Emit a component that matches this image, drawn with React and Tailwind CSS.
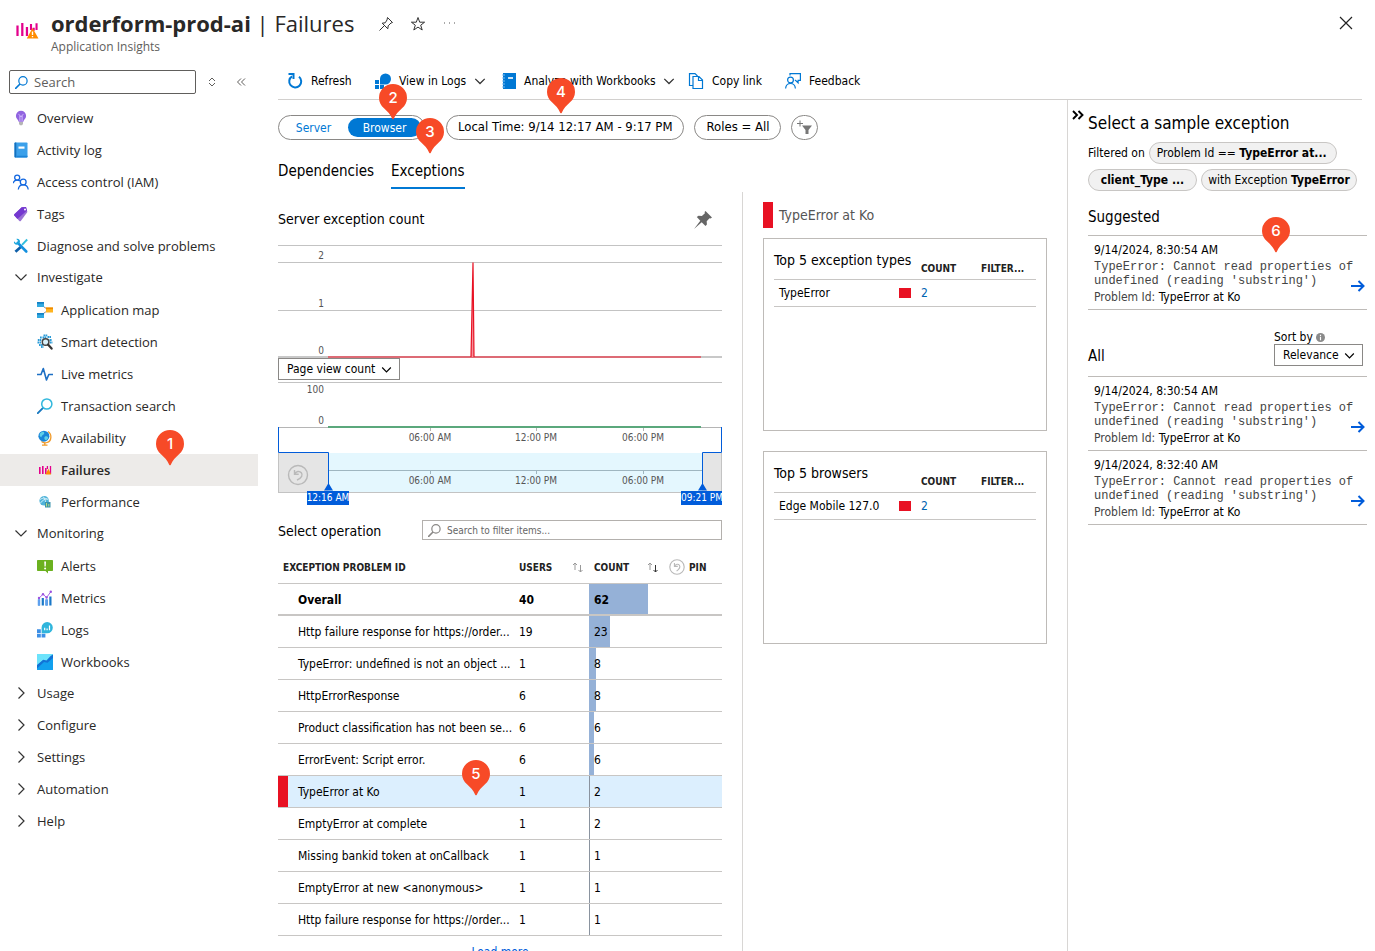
import React from "react";

const BLUE = "#0078d4";

function Svg({ size = 16, box = 16, children, className = "" }) {
  return (
    <svg width={size} height={size} viewBox={`0 0 ${box} ${box}`} fill="none" aria-hidden="true" className={"shrink-0 " + className}>
      {children}
    </svg>
  );
}

const FailuresIcon = ({ size = 16 }) => (
  <Svg size={size}>
    <path d="M1 5v7M4.2 3.300v8.700M7.300 6v6" stroke="#e3008c" strokeWidth="1.500" />
    <path d="M10 8V4M13.700 8V3.500M11.800 6.500v2" stroke="#e3008c" strokeWidth="1.400" />
    <path d="M11 6.600 15 13.700H7.200z" fill="#ff8c00" />
    <path d="M11 9v2.400M11 12v.9" stroke="#fff" strokeWidth=".9" />
  </Svg>
);

const FailuresSmallIcon = () => (
  <Svg>
    <path d="M2.800 5v7M5.800 4v8M8.800 6v6" stroke="#e3008c" strokeWidth="1.600" />
    <path d="M10.400 4v3M13.500 4v8" stroke="#e3008c" strokeWidth="1.300" />
    <path d="M11.400 6.800 14.200 12.500H8.400z" fill="#ff8c00" />
  </Svg>
);

const OverviewIcon = () => (
  <Svg>
    <path d="M8 .8a5.100 5.100 0 0 0-5.100 5.100c0 2.600 2.400 3.500 2.800 5.800h4.600c.4-2.300 2.800-3.200 2.800-5.800A5.100 5.100 0 0 0 8 .8z" fill="#9164e0" />
    <path d="M6.900 11V6.200M9.100 11V6.200M5.600 4.400c1.300 0 1.300 1.900 1.300 1.900h2.200s0-1.900 1.300-1.900" stroke="#d9c3ff" strokeWidth=".9" />
    <path d="M6 12h4v2l-1 1.300H7L6 14z" fill="#b5b5b5" />
  </Svg>
);

const LogBookIcon = () => (
  <Svg>
    <rect x="1.500" y=".5" width="13" height="15" rx=".8" fill="#3ba0ea" />
    <path d="M1.500 1.300a.8.800 0 0 1 .8-.8h1v15h-1a.8.800 0 0 1-.8-.8z" fill="#1470bd" />
    <path d="M3.300 13.800h11.200v.9a.8.800 0 0 1-.8.800H3.300z" fill="#1c84d8" />
    <rect x="5.500" y="4.500" width="6" height="2.200" fill="#fff" />
  </Svg>
);

const PeopleIcon = () => (
  <Svg>
    <g stroke="#1267e0" strokeWidth="1.300">
      <circle cx="4.200" cy="3.600" r="2.500" />
      <circle cx="10.200" cy="8" r="2.900" />
      <path d="M.3 9.200c.3-2 1.700-3.100 3.900-3.100 1.100 0 2 .3 2.700.8M5.300 15.500c.3-2.900 2-4.600 4.900-4.600s4.700 1.700 5 4.600" />
    </g>
  </Svg>
);

const TagIcon = () => (
  <Svg>
    <path d="M8.700 1.200 13 .9l1.400 5-6.600 9a1 1 0 0 1-1.400.1L1.300 9.600a1 1 0 0 1 0-1.300z" fill="#9a72d4" />
    <path d="m8.700 1.200 4.300-.3 1 3.600L4.400 12.900 1.300 9.600a1 1 0 0 1 0-1.300z" fill="#7438d0" />
    <circle cx="12" cy="3.400" r="1" fill="#fff" />
  </Svg>
);

const ToolsIcon = () => (
  <Svg>
    <path d="M14.200 1.500 9 6.800" stroke="#32bedd" strokeWidth="1.900" />
    <path d="M6.900 8 1.500 12.800l1.900 2L8.600 9.900z" fill="#0f5fa8" />
    <path d="m4.800 4.800 8.500 8.700" stroke="#1490df" strokeWidth="2.600" strokeLinecap="round" />
    <path d="M1 3.200 2.800 5l1.700-.4.5-1.800L3.300 1c2.200-.6 4 .9 3.700 3.300L4.800 6.600C2.400 7 .4 5.500 1 3.200z" fill="#1ba7dc" />
  </Svg>
);

const AppMapIcon = () => (
  <Svg>
    <path d="M5 3.500 10 7M5 12.500 10 9" stroke="#8a8a8a" strokeWidth="1" />
    <rect x="0" y="0" width="7" height="5" fill="#32a9e0" />
    <rect x="0" y="0" width="7" height="1.700" fill="#1380c4" />
    <rect x="0" y="11" width="7" height="5" fill="#32a9e0" />
    <rect x="0" y="11" width="7" height="1.700" fill="#1380c4" />
    <rect x="9" y="5.500" width="7" height="5" fill="#ffb41f" />
    <rect x="9" y="5.500" width="7" height="1.700" fill="#f08a00" />
  </Svg>
);

const SmartIcon = () => (
  <Svg>
    <path d="M3 3.500h2M6.500 1.300h4M10.500 3h3.500M.8 6h3.500M12.500 6H15M.5 8.500h3.500M2 11h4M13 8.500h2.500M5.500 3.500h4M4 13h2.500" stroke="#2b9bd7" strokeWidth="1.800" strokeDasharray="1.700 .4" />
    <circle cx="8.600" cy="8" r="3.300" fill="#d8f1fb" stroke="#444" strokeWidth="1.500" />
    <path d="m11 10.600 3.600 4" stroke="#333" strokeWidth="2.200" strokeLinecap="round" />
  </Svg>
);

const PulseIcon = () => (
  <Svg>
    <path d="M0 8.500h4L6.300 2.500l3.200 11.500 2.300-5.500H16" stroke="#1d6fc4" strokeWidth="1.600" strokeLinejoin="round" />
  </Svg>
);

const LensIcon = ({ color = "#32b8dd", handle = "#1878c0", size = 16, className = "" }) => (
  <Svg size={size} className={className}>
    <path d="m5.800 10.200-5 5" stroke={handle} strokeWidth="1.900" strokeLinecap="round" />
    <circle cx="9.800" cy="6" r="5.100" stroke={color} strokeWidth="1.500" />
  </Svg>
);

const GlobeIcon = () => (
  <Svg>
    <path d="M11 1.500c4 2.500 4 9.500-1 11-2 .6-4 .3-5.500-1" stroke="#f09a2a" strokeWidth="1.300" />
    <circle cx="6.900" cy="6.200" r="5.500" fill="#1b86d8" />
    <path d="M3 3.500c2-2.500 4-2 4.300-.5C7 5 4.500 5 4.500 7.300 3 7 2 5.500 3 3.500zM8 6.500c2-.8 3.200 0 3 1.500-.5 1.800-2 2.500-3 1.800-.7-1-1-2.500 0-3.300z" fill="#5fd0e8" />
    <path d="M7.800 12.800v2M5 15.200h5.500" stroke="#f09a2a" strokeWidth="1.300" />
  </Svg>
);

const PerfIcon = () => (
  <Svg>
    <circle cx="7.200" cy="6.800" r="4.800" fill="#4fb3d9" />
    <path d="M3 5.500c3-2 6-1.500 8.500.5M3.500 9c2-3 5-4.500 7-4M6 2.500c2 2 3 5 2.500 8.500" stroke="#d7f1fa" strokeWidth=".9" />
    <rect x="8" y="8" width="5.500" height="5.500" fill="#3b93ad" />
    <path d="M9.500 9v3.500M11.800 10v2.500" stroke="#c5e37a" strokeWidth=".9" />
  </Svg>
);

const AlertIcon = () => (
  <Svg>
    <path d="M.7 2h14.600a.7.700 0 0 1 .7.700v9.600a.7.700 0 0 1-.7.700H11v2.500L8.500 13H.7a.7.700 0 0 1-.7-.7V2.700A.7.700 0 0 1 .7 2z" fill="#6bb11f" />
    <path d="M7.200 3.500h1.800l-.3 5H7.500z" fill="#fff" />
    <circle cx="8.100" cy="10.400" r="1" fill="#fff" />
  </Svg>
);

const MetricsIcon = () => (
  <Svg>
    <path d="M2 9.500v6M5.800 8v7.500M9.600 9.500v6M13.400 6.500v9" stroke="#1a78c8" strokeWidth="2.200" />
    <path d="M2 9.500v6M9.600 9.500v6" stroke="#5ea0ef" strokeWidth="2.200" />
    <path d="m2 8.200 4-4L9.600 7.500 14 1.500" stroke="#a566e8" strokeWidth="1" />
    <g fill="#9b52e0"><circle cx="2" cy="8" r="1.200" /><circle cx="6" cy="4.200" r="1.200" /><circle cx="9.600" cy="7.500" r="1.200" /><circle cx="13.800" cy="1.700" r="1.200" /></g>
  </Svg>
);

const LogsIcon = () => (
  <Svg>
    <path d="M0 7.200h3.800V11H0zM0 11.700h3.800v3.800H0zM4.600 11.700h3.800v3.800H4.600z" fill="#3d8fe6" />
    <path d="M4.600 5.800A5.600 5.600 0 1 1 10 11.200H4.600z" fill="#2fb5dc" />
    <path d="M7.700 5.800v2.500M10.100 6.600v1.700M12.500 3.600v4.700" stroke="#fff" strokeWidth="1.200" />
  </Svg>
);

const WorkbooksIcon = () => (
  <Svg>
    <rect width="16" height="16" rx=".5" fill="#12a0ee" />
    <path d="M0 0h16v1L9.500 7 6 6.200 0 12z" fill="#6de3fb" />
    <path d="M16 .5v3.600L10.500 8.800 7 8 0 14.500V11l6.200-5.200 3.300.8L13.600 2z" fill="#1272d6" />
  </Svg>
);

const Chevron = ({ dir = "down", size = 14, color = "#333", width = 1.2 }) => (
  <Svg size={size} box={14}>
    <path d={dir === "down" ? "M1.500 4.500 7 10l5.500-5.500" : "M4.500 1.500 10 7l-5.500 5.500"} stroke={color} strokeWidth={width} />
  </Svg>
);

const UndoCircle = ({ size = 16 }) => (
  <Svg size={size} box={20}>
    <circle cx="10" cy="10" r="9" stroke="#b9b9b9" strokeWidth="1.400" />
    <path d="M6.800 5v4.200H11M7 9c1.500-2.700 4.500-3.200 6-1.200 1.500 2.300.5 4.300-3.500 7.400" stroke="#b9b9b9" strokeWidth="1.400" />
  </Svg>
);

function Marker({ n, className }) {
  return (
    <span className={"pointer-events-none absolute z-20 flex h-9 w-7 justify-center " + className}>
      <svg width="28" height="36" viewBox="0 0 28 36" className="absolute left-0 top-0" aria-hidden="true">
        <path d="M14 0a14 14 0 0 1 14 14c0 4.500-2 7.500-5 10.300-3.500 3.200-6.500 6.200-8.200 10.400q-.8 1.300-1.600 0C11.500 30.500 8.500 27.500 5 24.300 2 21.500 0 18.500 0 14A14 14 0 0 1 14 0z" fill="#f74a27" />
      </svg>
      <span className="relative font-[Inter,sans-serif] text-[15px] font-medium leading-7 text-white">{n}</span>
    </span>
  );
}

const topItems = [
  ["Overview", OverviewIcon],
  ["Activity log", LogBookIcon],
  ["Access control (IAM)", PeopleIcon],
  ["Tags", TagIcon],
  ["Diagnose and solve problems", ToolsIcon],
];
const investigate = [
  ["Application map", AppMapIcon],
  ["Smart detection", SmartIcon],
  ["Live metrics", PulseIcon],
  ["Transaction search", LensIcon],
  ["Availability", GlobeIcon],
  ["Failures", FailuresSmallIcon],
  ["Performance", PerfIcon],
];
const monitoring = [
  ["Alerts", AlertIcon],
  ["Metrics", MetricsIcon],
  ["Logs", LogsIcon],
  ["Workbooks", WorkbooksIcon],
];

function NavItem({ label, Icon, nested }) {
  const active = label === "Failures";
  return (
    <li className={"relative " + (active ? "bg-[#edebe9] font-semibold" : "")}>
      <a href="#" aria-current={active ? "page" : undefined} className={"flex h-8 items-center gap-2 " + (nested ? "pl-[37px]" : "pl-[13px]")}>
        <Icon />
        {label}
      </a>
      {active && <Marker n="1" className="-top-6 left-[156px]" />}
    </li>
  );
}

function NavGroup({ label, items }) {
  return (
    <li>
      <button type="button" aria-expanded={!!items} className="flex h-8 w-full items-center gap-[9px] pb-[2px] pl-[14px] text-left">
        <Chevron dir={items ? "down" : "right"} />
        {label}
      </button>
      {items && <ul>{items.map(([l, I]) => <NavItem key={l} label={l} Icon={I} nested />)}</ul>}
    </li>
  );
}

function Sidebar() {
  return (
    <nav className="w-[258px] shrink-0 text-[13px] leading-4 text-[#292827] [font-family:'Open_Sans','Noto_Sans',sans-serif]" aria-label="Resource menu">
      <div className="mb-2 flex items-center pl-[9px] pt-1">
        <label className="flex h-6 w-[187px] items-center gap-1.5 rounded-[2px] border border-[#605e5c] px-[5px]">
          <LensIcon size={13} color={BLUE} handle={BLUE} />
          <input type="text" aria-label="Search" placeholder="Search" className="w-full min-w-0 bg-transparent outline-none placeholder:text-[#605e5c]" />
        </label>
        <button type="button" aria-label="Expand or collapse all" className="ml-2 flex w-4 justify-center">
          <Svg size={10} box={10}><path d="M2 4l3-3 3 3M2 6l3 3 3-3" stroke="#605e5c" /></Svg>
        </button>
        <button type="button" aria-label="Collapse menu" className="ml-4 flex">
          <Svg size={10} box={10}><path d="M5 1.500 1.500 5 5 8.500M9 1.500 5.500 5 9 8.500" stroke="#605e5c" /></Svg>
        </button>
      </div>
      <ul>
        {topItems.map(([l, I]) => <NavItem key={l} label={l} Icon={I} />)}
        <NavGroup label="Investigate" items={investigate} />
        <NavGroup label="Monitoring" items={monitoring} />
        {["Usage", "Configure", "Settings", "Automation", "Help"].map((l) => <NavGroup key={l} label={l} />)}
      </ul>
    </nav>
  );
}

function Toolbar() {
  return (
    <div className="mr-[13px] flex h-[34px] items-center whitespace-nowrap border-b border-[#d2d0ce] pb-[3px] pl-[9px] pr-3 text-[12px]" role="toolbar">
      <button type="button" className="flex w-[88px] items-center gap-2">
        <Svg><path d="M5 3.400A6 6 0 1 0 12 3.800" stroke={BLUE} strokeWidth="2" /><path d="M1.500 1h5v5" stroke={BLUE} strokeWidth="2" /></Svg>
        Refresh
      </button>
      <button type="button" className="flex w-[126px] items-center gap-2 pr-[19px]">
        <Svg><path d="M0 7h4v4H0zM0 12h4v4H0zM5 12h4v4H5zM5 6a5.500 5.500 0 1 1 5.500 5.500H5z" fill={BLUE} /></Svg>
        <span className="mr-auto">View in Logs</span>
        <Chevron size={12} width={1.500} />
      </button>
      <button type="button" className="flex w-[187px] items-center gap-[7px] pr-[19px]">
        <Svg>
          <path d="M2 0h13v16H2z" fill={BLUE} />
          <path d="M1 2h3M1 5h3M1 8h3M1 11h3M1 14h3" stroke="#7fbdf0" />
          <path d="M7 5h5" stroke="#fff" strokeWidth="1.600" />
        </Svg>
        <span className="mr-auto">Analyze with Workbooks</span>
        <Chevron size={12} width={1.500} />
      </button>
      <button type="button" className="flex w-[97px] items-center gap-2">
        <Svg><path d="M5 12.500H1.500V.6H7L9.500 3M5 3.500h6l3.500 3.500v8.500H5zM10.500 3.500V7.500h4" stroke={BLUE} strokeWidth="1.200" /></Svg>
        Copy link
      </button>
      <button type="button" className="flex items-center gap-2">
        <Svg>
          <g stroke={BLUE} strokeWidth="1.200"><circle cx="5.500" cy="7" r="2.900" /><path d="M.6 15.500c.3-3.200 2-5 4.900-5s4.600 1.800 4.900 5M5 2.500V.7h10.400v6.600h-2.300v2.500L10.500 7.300H9.800" /></g>
        </Svg>
        Feedback
      </button>
    </div>
  );
}

function Filters() {
  return (
    <div className="flex items-center gap-[10px] whitespace-nowrap pt-[15px] text-[13px]">
      <div className="relative mr-[11px] flex h-[25px] w-[147px] items-center rounded-full border border-[#8a8886] pr-[3px] text-[12px]">
        <button type="button" className="flex-1 text-[#0078d4]">Server</button>
        <button type="button" className="h-[19px] w-[73px] rounded-full bg-[#0078d4] text-white">Browser</button>
        <Marker n="2" className="-top-8 left-[100px]" />
        <Marker n="3" className="top-[2px] left-[137px]" />
      </div>
      <button type="button" className="relative h-[25px] rounded-full border border-[#8a8886] px-[11px] pb-[2px]">
        Local Time: 9/14 12:17 AM - 9:17 PM
        <Marker n="4" className="-top-[38px] left-[100px]" />
      </button>
      <button type="button" className="h-[25px] rounded-full border border-[#8a8886] px-[11px] pb-[2px]">Roles = All</button>
      <button type="button" aria-label="Add filter" className="flex h-[25px] w-[27px] items-center justify-center rounded-full border border-[#8a8886]">
        <Svg size={18} box={18}><path d="M4 1.500v6M1 4.500h6" stroke="#777" /><path d="M6 6.500h10l-3.500 4.500V15h-3v-4z" fill="#777" /></Svg>
      </button>
    </div>
  );
}

function AxisLabels({ y }) {
  return [[152, "06:00 AM"], [258, "12:00 PM"], [365, "06:00 PM"]].map(([x, t]) => (
    <text key={x} x={x} y={y} textAnchor="middle">{t}</text>
  ));
}

function Charts() {
  return (
    <div className="text-[10px]">
      <svg viewBox="0 0 444 113" className="block w-full fill-[#555]" role="img" aria-label="Server exception count chart">
        <path d="M0 .5h444M0 17.500h444M0 65.500h444" stroke="#c3c3c3" />
        <path d="M0 112h444" stroke="#c8c8c8" strokeWidth="2" />
        <path d="M50 112h373" stroke="#dd6b75" strokeWidth="2" />
        <path d="M193 112 195 17.500 196 112" stroke="#e81123" strokeWidth="1.200" fill="#f4909a" />
        <g textAnchor="end"><text x="46" y="14">2</text><text x="46" y="62">1</text><text x="46" y="109">0</text></g>
      </svg>
      <div className="relative flex h-[22px] w-[122px] items-center border border-[#8a8886] bg-white">
        <select aria-label="Secondary chart" className="h-full w-full appearance-none bg-transparent pl-2 text-[12px] outline-none">
          <option>Page view count</option>
        </select>
        <span className="pointer-events-none absolute right-[7px]"><Chevron size={11} width={1.500} color="#000" /></span>
      </div>
      <svg viewBox="0 0 444 126" className="block w-full fill-[#555]" role="img" aria-label="Page view count chart and time range">
        <path d="M0 2.500h444" stroke="#c3c3c3" />
        <g textAnchor="end"><text x="46" y="13">100</text><text x="46" y="44">0</text></g>
        <path d="M0 47.500h444M152.500 47v4M258.500 47v4M365.500 47v4" stroke="#b5b5b5" />
        <path d="M50 47h373" stroke="#5ba87c" strokeWidth="2" />
        <AxisLabels y={61} />
        <path d="M50 73h374v39H50z" fill="#e4f7fe" />
        <path d="M0 73h50v39H0zM424 73h20v39h-20z" fill="#e5e5e5" />
        <path d="M50 90.500h374M152.500 90v4M258.500 90v4M365.500 90v4" stroke="#9fb6c0" />
        <AxisLabels y={104} />
        <path d="M0 112.500h444M.5 73v39M443.500 73v39" stroke="#c3c3c3" />
        <path d="M.5 47v25.500h50V110M443.500 47v25.500h-19V110" stroke="#015cda" fill="none" />
        <path d="M50.500 103l4.500 7.500h-9zM424.500 103l4.500 7.500h-9z" fill="#015cda" />
        <g stroke="#b9b9b9" fill="none" strokeWidth="1.400"><circle cx="20" cy="95" r="9.500" /><path d="M16.500 90v4.200h4.200M16.700 94c1.300-2.700 4.800-3.400 6.600-1.200 1.800 2.300.7 4.600-4.300 7.400" /></g>
        <path d="M29 111h42v14H29zM403 111h41v14h-41z" fill="#015cda" />
        <g className="fill-white" textAnchor="middle"><text x="50" y="121">12:16 AM</text><text x="424" y="121">09:21 PM</text></g>
      </svg>
    </div>
  );
}

const rows = [
  ["Http failure response for https://order...", 19, 23, 21],
  ["TypeError: undefined is not an object ...", 1, 8, 7],
  ["HttpErrorResponse", 6, 8, 7],
  ["Product classification has not been se...", 6, 6, 5],
  ["ErrorEvent: Script error.", 6, 6, 5],
  ["TypeError at Ko", 1, 2, 1],
  ["EmptyError at complete", 1, 2, 1],
  ["Missing bankid token at onCallback", 1, 1, 1],
  ["EmptyError at new <anonymous>", 1, 1, 1],
  ["Http failure response for https://order...", 1, 1, 1],
];

const SortIcon = ({ active }) => (
  <Svg size={11} box={11}>
    <path d="M3 8V1M1 3l2-2 2 2" stroke="#999" />
    <path d="M8.500 3v7M6.500 8l2 2 2-2" stroke={active ? "#333" : "#999"} />
  </Svg>
);

function CountCell({ value, width }) {
  return (
    <td className="relative pl-[5px] pt-[2px]">
      <span className={"absolute inset-y-0 left-0 " + (width > 1 ? "bg-[#95b1d7]" : "bg-[#8a939f]")} style={{ width }} />
      <span className="relative">{value}</span>
    </td>
  );
}

function Operations() {
  return (
    <section>
      <div className="flex items-center justify-between pt-[14px]">
        <h2 className="pt-[2px] text-[14px] leading-[18px]">Select operation</h2>
        <label className="flex h-5 w-[300px] items-center gap-1.5 border border-[#b3b0ad] px-[5px]">
          <LensIcon size={13} color="#8a8886" handle="#8a8886" />
          <input type="text" aria-label="Filter operations" placeholder="Search to filter items..." className="w-full min-w-0 bg-transparent text-[10px] outline-none placeholder:text-[#666]" />
        </label>
      </div>
      <table className="mt-3 w-full table-fixed border-collapse text-left text-[12px]">
        <colgroup><col /><col className="w-[75px]" /><col className="w-[75px]" /><col className="w-[58px]" /></colgroup>
        <thead>
          <tr className="h-[31px] border-b border-[#c8c6c4] text-[10px] text-[#222]">
            <th className="pl-[5px]">EXCEPTION PROBLEM ID</th>
            <th><span className="flex items-center justify-between pl-[5px] pr-1.5">USERS <SortIcon /></span></th>
            <th><span className="flex items-center justify-between pl-[5px] pr-1.5">COUNT <SortIcon active /></span></th>
            <th><span className="flex items-center gap-1 pl-[5px]"><UndoCircle /> PIN</span></th>
          </tr>
        </thead>
        <tbody>
          <tr className="h-8 border-b-2 border-[#c8c6c4] font-bold">
            <td className="pl-5 pt-[2px]">Overall</td>
            <td className="pl-[5px] pt-[2px]">40</td>
            <CountCell value={62} width={59} />
            <td />
          </tr>
          {rows.map(([name, users, count, width], i) => {
            const selected = name === "TypeError at Ko";
            return (
              <tr key={i} className={"h-8 border-b border-[#c8c6c4] " + (selected ? "bg-[#dceffe]" : "")}>
                <td className="relative whitespace-nowrap pl-5 pt-[2px]">
                  {selected && <span className="absolute inset-y-0 left-0 w-[10px] bg-[#e81123]" />}
                  {name}
                  {selected && <Marker n="5" className="-top-4 left-[184px]" />}
                </td>
                <td className="pl-[5px] pt-[2px]">{users}</td>
                <CountCell value={count} width={width} />
                <td />
              </tr>
            );
          })}
        </tbody>
      </table>
      <a href="#" className="mt-2 block text-center text-[12px] leading-4 text-[#015cda]">Load more</a>
    </section>
  );
}

function TopCard({ title, name }) {
  return (
    <section className="mb-5 h-[193px] border border-[#bebbb8] px-[10px] pt-2">
      <table className="w-full table-fixed border-collapse text-left">
        <colgroup><col /><col className="w-[60px]" /><col className="w-[55px]" /></colgroup>
        <thead>
          <tr className="h-8 border-b border-[#c8c6c4]">
            <th className="whitespace-nowrap pb-1 text-[14px] font-normal">{title}</th>
            <th className="pt-3 text-[10px] text-[#222]">COUNT</th>
            <th className="pt-3 text-[10px] text-[#222]">FILTER...</th>
          </tr>
        </thead>
        <tbody>
          <tr className="h-[27px] border-b border-[#c8c6c4] text-[12px]">
            <td className="pl-[5px]"><span className="flex items-center justify-between pr-[10px]">{name}<span className="h-[10px] w-3 bg-[#e81123]" /></span></td>
            <td><a href="#" className="text-[#0063b1]">2</a></td>
            <td />
          </tr>
        </tbody>
      </table>
    </section>
  );
}

function Sample({ time, children }) {
  return (
    <li className="relative border-b border-[#bebbb8] pl-1.5 pt-[6px] pb-1">
      <a href="#" className="block pr-1">
        <span className="block text-[12px] leading-4">{time}</span>
        <span className="block pb-[1px] pt-[2px] pr-2 text-[12px] leading-[14px] text-[#444] [font-family:'Liberation_Mono',monospace]">TypeError: Cannot read properties of undefined (reading 'substring')</span>
        <span className="block text-[12px] leading-4"><span className="text-[#444]">Problem Id:</span> TypeError at Ko</span>
        <span className="absolute bottom-4 right-[2px]">
          <Svg size={14} box={14}><path d="M0 7h12.500M7.500 2l5 5-5 5" stroke="#015cda" strokeWidth="2" /></Svg>
        </span>
      </a>
      {children}
    </li>
  );
}

function SamplePanel() {
  const chip = "flex h-[22px] items-center whitespace-pre rounded-full border border-[#c8c6c4] bg-[#f1f1f1]";
  return (
    <aside className="w-[308px] shrink-0 border-l border-[#d8d6d4] pr-2 text-[12px]">
      <div className="flex pl-1 pt-[10px]">
        <button type="button" aria-label="Collapse panel" className="mr-1 flex h-[10px] w-3">
          <Svg size={12} box={12}><path d="M1 1 5 5 1 9M6.500 1l4 4-4 4" stroke="#000" strokeWidth="1.900" /></Svg>
        </button>
        <h2 className="pt-[1px] text-[17px] leading-6">Select a sample exception</h2>
      </div>
      <div className="pl-5">
        <div className="flex flex-wrap items-center gap-x-[4px] gap-y-[5px] pt-[7px]">
          <span>Filtered on</span>
          <span className={chip + " w-[188px] pl-[7px]"}>Problem Id == <b>TypeError at...</b></span>
          <span className={chip + " w-[109px] justify-center"}><b>client_Type ...</b></span>
          <span className={chip + " w-[156px] justify-center"}>with Exception <b>TypeError</b></span>
        </div>
        <h3 className="pb-2 pt-4 text-[15px] leading-5">Suggested</h3>
        <ul className="border-t border-[#bebbb8]">
          <Sample time="9/14/2024, 8:30:54 AM"><Marker n="6" className="-top-[19px] left-[174px]" /></Sample>
        </ul>
        <div className="flex items-end justify-between pb-[10px] pr-1 pt-5">
          <h3 className="text-[15px] leading-5">All</h3>
          <div className="w-[89px]">
            <label htmlFor="sort" className="flex items-center gap-[3px] leading-[14px]">
              Sort by
              <Svg size={9} box={10}><circle cx="5" cy="5" r="5" fill="#8a8a8a" /><path d="M5 4.300V8M5 2v1.300" stroke="#fff" strokeWidth="1.300" /></Svg>
            </label>
            <div className="relative flex h-[22px] items-center border border-[#8a8886]">
              <select id="sort" className="h-full w-full appearance-none bg-transparent pl-2 outline-none"><option>Relevance</option></select>
              <span className="pointer-events-none absolute right-[7px]"><Chevron size={11} width={1.500} color="#000" /></span>
            </div>
          </div>
        </div>
        <ul className="border-t border-[#bebbb8]">
          <Sample time="9/14/2024, 8:30:54 AM" />
          <Sample time="9/14/2024, 8:32:40 AM" />
        </ul>
      </div>
    </aside>
  );
}

export default function App() {
  return (
    <div className="flex h-screen flex-col overflow-hidden bg-white text-black [font-family:'DejaVu_Sans_Condensed','Noto_Sans',sans-serif]">
      <header className="flex h-[66px] shrink-0 items-start pl-4 pr-[22px] text-[#292827] [font-family:'Open_Sans','Noto_Sans',sans-serif]">
        <span className="mt-[18px]"><FailuresIcon size={24} /></span>
        <div className="ml-[11px] pt-[7px]">
          <h1 className="text-[22px] leading-8"><span className="font-bold">orderform-prod-ai</span> | Failures</h1>
          <p className="text-[12px] leading-4 text-[#605e5c]">Application Insights</p>
        </div>
        <div className="ml-6 mt-4 flex gap-4">
          <button type="button" aria-label="Pin">
            <Svg><path d="m9.500 1.500 5 5-1.500.5-2.800 2.800-.4 3-5.600-5.600 3-.4L9 4zM6.800 9.200 1.500 14.500" stroke="#333" /></Svg>
          </button>
          <button type="button" aria-label="Favorite">
            <Svg><path d="m8 1.500 1.700 4.700h4.900l-3.900 3 1.500 4.800L8 11.100 3.800 14l1.500-4.800-3.900-3h4.900z" stroke="#333" /></Svg>
          </button>
          <button type="button" aria-label="More">
            <Svg><path d="M2 7h1M7 7h1M12 7h1" stroke="#555" /></Svg>
          </button>
        </div>
        <button type="button" aria-label="Close" className="ml-auto mt-4">
          <Svg size={14} box={14}><path d="m1 1 12 12M13 1 1 13" stroke="#222" strokeWidth="1.200" /></Svg>
        </button>
      </header>
      <div className="flex min-h-0 flex-1">
        <Sidebar />
        <main className="flex min-w-0 flex-1 flex-col pl-5">
          <Toolbar />
          <div className="flex min-h-0 flex-1">
            <div className="flex min-w-0 flex-1 flex-col">
              <Filters />
              <div className="flex gap-[17px] pt-[20px] text-[15px]" role="tablist">
                <button type="button" role="tab" className="h-[29px] border-b-2 border-transparent pb-1">Dependencies</button>
                <button type="button" role="tab" aria-selected="true" className="h-[29px] border-b-2 border-[#0078d4] pb-1">Exceptions</button>
              </div>
              <div className="mt-[3px] flex min-h-0 flex-1">
                <div className="min-w-0 flex-1 pr-5">
                  <div className="flex h-[53px] items-center justify-between pr-[10px] pt-[2px]">
                    <h2 className="text-[14px]">Server exception count</h2>
                    <button type="button" aria-label="Pin chart">
                      <Svg size={18} box={18}><path d="m11.500 0 6.500 6.500-1.500 1-1-.2-2.800 3 .2 3.200-1.400 1.500-3.800-3.800L0 18l6.300-8.200-3.500-3.700L4.500 4.800l3.400.2 3-2.800-.3-1.200z" fill="#666" /></Svg>
                    </button>
                  </div>
                  <Charts />
                  <Operations />
                </div>
                <div className="w-[325px] shrink-0 border-l border-[#d8d6d4] px-5 pt-[10px]">
                  <h2 className="mb-[10px] flex h-[26px] items-center border-l-[10px] border-[#e81123] pl-1.5 text-[14px] text-[#555]">TypeError at Ko</h2>
                  <TopCard title="Top 5 exception types" name="TypeError" />
                  <TopCard title="Top 5 browsers" name="Edge Mobile 127.0" />
                </div>
              </div>
            </div>
            <SamplePanel />
          </div>
        </main>
      </div>
    </div>
  );
}
